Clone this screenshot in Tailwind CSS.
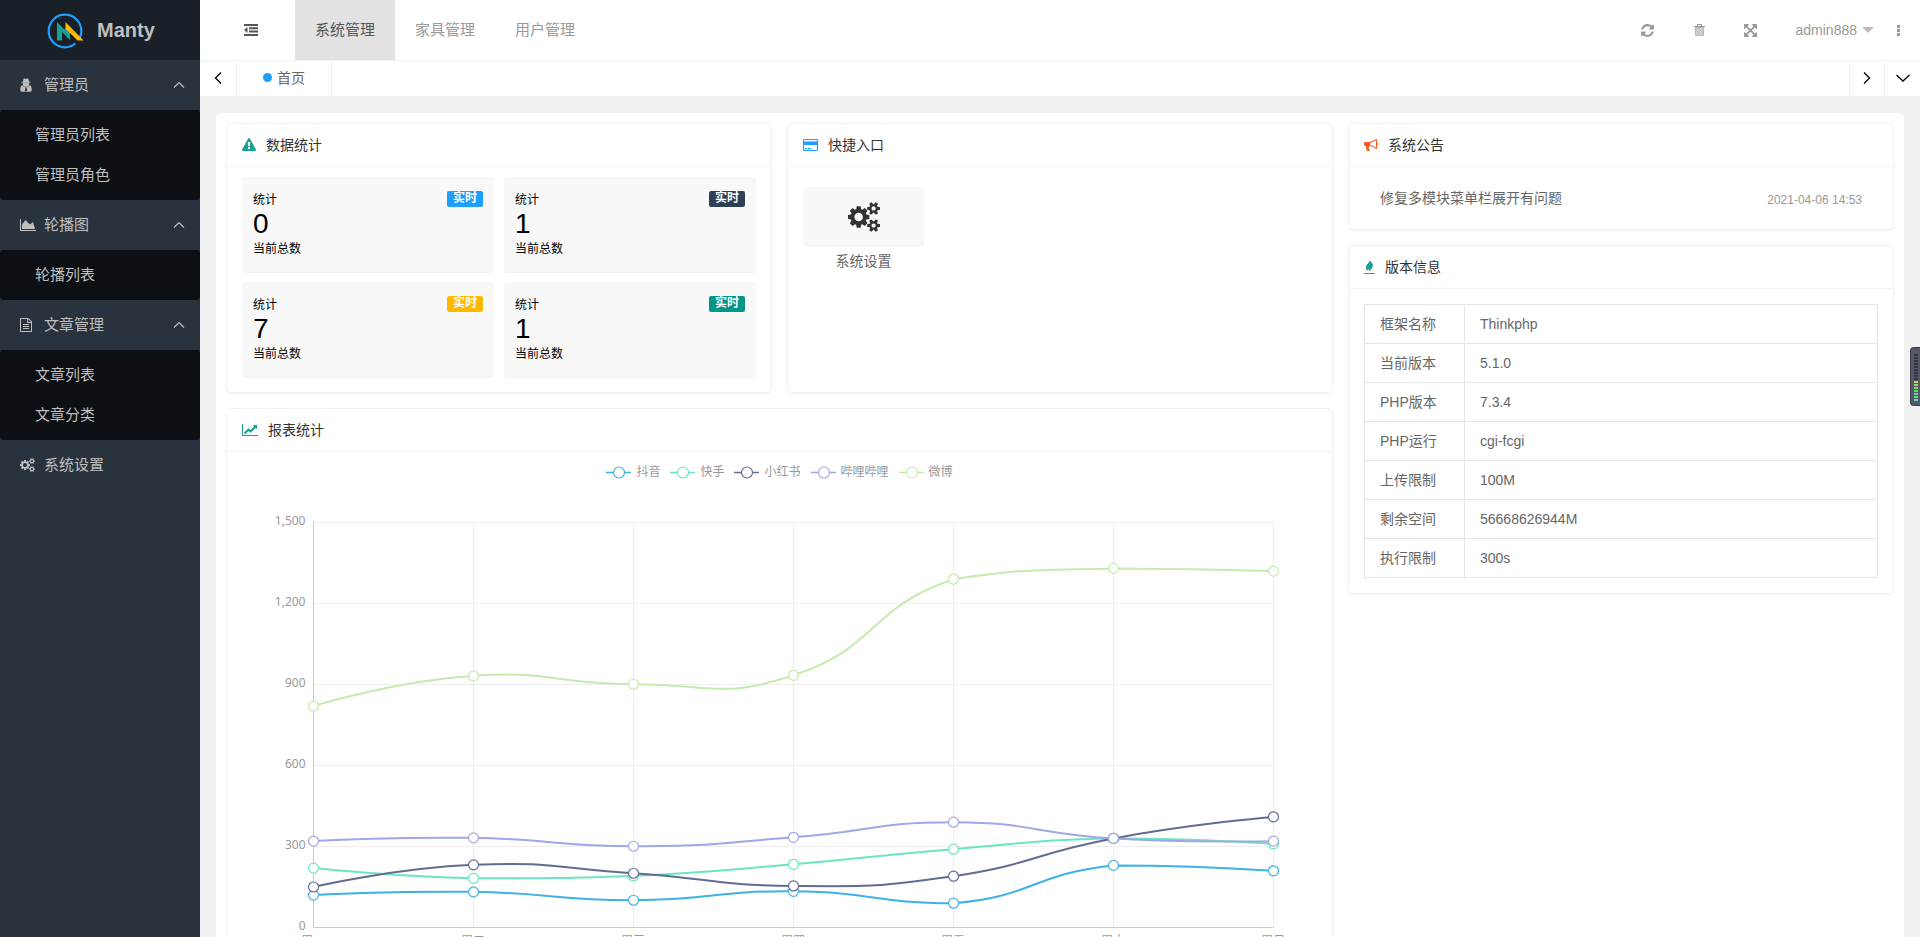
<!DOCTYPE html>
<html lang="zh-CN">
<head>
<meta charset="utf-8">
<meta name="viewport" content="width=device-width, initial-scale=1">
<title>Manty</title>
<script src="https://cdn.jsdelivr.net/npm/@tailwindcss/browser@4"></script>
</head>
<body class="font-['Liberation_Sans','Noto_Sans_CJK_SC',sans-serif] text-sm leading-6 text-[#333]">

<!-- shared icon shapes -->
<svg class="hidden" aria-hidden="true">
  <symbol id="i-cogs" viewBox="0 0 1920 1792"><path d="M896 896q0-106-75-181t-181-75-181 75-75 181 75 181 181 75 181-75 75-181zm768 512q0-52-38-90t-90-38-90 38-38 90q0 53 37.500 90.500t90.500 37.500 90.500-37.500 37.500-90.500zm0-1024q0-52-38-90t-90-38-90 38-38 90q0 53 37.500 90.500t90.500 37.500 90.500-37.500 37.500-90.500zm-384 421v185q0 10-7 19.500t-16 10.500l-155 24q-11 35-32 76 34 48 90 115 7 11 7 20 0 12-7 19-23 30-82.500 89.500t-78.500 59.500q-11 0-21-7l-115-90q-37 19-77 31-11 108-23 155-7 24-30 24h-186q-11 0-20-7.500t-10-17.500l-23-153q-34-10-75-31l-118 89q-7 7-20 7-11 0-21-8-144-133-144-160 0-9 7-19 10-14 41-53t47-61q-23-44-35-82l-152-24q-10-1-17-9.500t-7-19.500v-185q0-10 7-19.500t16-10.500l155-24q11-35 32-76-34-48-90-115-7-11-7-20 0-12 7-20 22-30 82-89t79-59q11 0 21 7l115 90q34-18 77-32 11-108 23-154 7-24 30-24h186q11 0 20 7.500t10 17.500l23 153q34 10 75 31l118-89q8-7 20-7 11 0 21 8 144 133 144 160 0 8-7 19-12 16-42 54t-45 60q23 48 34 82l152 23q10 2 17 10.500t7 19.500zm640 533v140q0 16-149 31-12 27-30 52 51 113 51 138 0 4-4 7-122 71-124 71-8 0-46-47t-52-68q-20 2-30 2t-30-2q-14 21-52 68t-46 47q-2 0-124-71-4-3-4-7 0-25 51-138-18-25-30-52-149-15-149-31v-140q0-16 149-31 13-29 30-52-51-113-51-138 0-4 4-7 4-2 35-20t59-34 30-16q8 0 46 46.500t52 67.500q20-2 30-2t30 2q51-71 92-112l6-2q4 0 124 70 4 3 4 7 0 25-51 138 17 23 30 52 149 15 149 31zm0-1024v140q0 16-149 31-12 27-30 52 51 113 51 138 0 4-4 7-122 71-124 71-8 0-46-47t-52-68q-20 2-30 2t-30-2q-14 21-52 68t-46 47q-2 0-124-71-4-3-4-7 0-25 51-138-18-25-30-52-149-15-149-31v-140q0-16 149-31 13-29 30-52-51-113-51-138 0-4 4-7 4-2 35-20t59-34 30-16q8 0 46 46.500t52 67.500q20-2 30-2t30 2q51-71 92-112l6-2q4 0 124 70 4 3 4 7 0 25-51 138 17 23 30 52 149 15 149 31z"/></symbol>
  <symbol id="i-up" viewBox="0 0 12 8"><path d="M1 6.500 6 1.500 11 6.500" fill="none" stroke="currentColor" stroke-width="1.200"/></symbol>
</svg>

<div class="flex h-screen overflow-hidden bg-[#f1f1f1]">

  <!-- sidebar -->
  <aside class="flex w-[200px] shrink-0 flex-col bg-[#28333e] text-[15px] text-[#bfbfbf]">
    <a href="#" class="flex h-[60px] shrink-0 items-center gap-3 bg-[#192027] pl-[47px]">
      <svg class="size-[38px]" viewBox="0 -1 38 38">
        <circle cx="18" cy="19" r="16.300" fill="none" stroke="#1e9fff" stroke-width="2.200"/>
        <path d="M27 28 L37 28 L34 34 L29 33Z" fill="#192027"/>
        <path d="M10 10 23 23V28L15 20V28.500H10Z" fill="#1aa094"/>
        <path d="M23 15V28L18 22.500V16Z" fill="#1aa094"/>
        <path d="M18.500 10 36.500 28.500H30.500L18.500 16.500Z" fill="#ffb800"/>
      </svg>
      <span class="text-xl font-bold">Manty</span>
    </a>
    <nav>
      <button type="button" class="flex h-[50px] w-full items-center pl-5 pr-[15px] text-left">
        <svg class="mr-3 h-[14px] w-3" viewBox="0 0 12 14" fill="currentColor">
          <path d="M3 3.500 3.600.8Q4 .1 4.800.5L6 .9 7.200.5Q8 .1 8.400.8L9 3.500 10.500 4v.7H1.500V4Z"/>
          <path d="M2.800 4.700h6.400v1.700Q8.900 8.600 6 8.800 3.100 8.600 2.800 6.400Z"/>
          <path fill-rule="evenodd" d="M2.200 7Q.3 8 .3 12.300q0 1.400 1.400 1.400h8.600q1.400 0 1.400-1.400 0-4.300-1.900-5.300L8.500 8.500H3.500ZM5 9.500h2L6.700 10.500 7.200 12.800 6 13.500 4.800 12.800 5.300 10.500Z"/>
        </svg>
        <span class="grow">管理员</span>
        <svg class="h-2 w-3"><use href="#i-up"/></svg>
      </button>
      <div class="flex flex-col rounded-sm bg-[#0c0f13] py-[5px]">
        <a href="#" class="h-10 pl-[35px] leading-10">管理员列表</a>
        <a href="#" class="h-10 pl-[35px] leading-10">管理员角色</a>
      </div>
      <button type="button" class="flex h-[50px] w-full items-center pl-5 pr-[15px] text-left">
        <svg class="mr-2 h-[14px] w-4" viewBox="0 0 2048 1792" fill="currentColor"><path d="M2048 1536v128h-2048v-1536h128v1408h1920zm-384-1024l256 896h-1664v-576l448-576 576 576z"/></svg>
        <span class="grow">轮播图</span>
        <svg class="h-2 w-3"><use href="#i-up"/></svg>
      </button>
      <div class="flex flex-col rounded-sm bg-[#0c0f13] py-[5px]">
        <a href="#" class="h-10 pl-[35px] leading-10">轮播列表</a>
      </div>
      <button type="button" class="flex h-[50px] w-full items-center pl-[19px] pr-[15px] text-left">
        <svg class="mr-[11px] size-[14px]" viewBox="0 0 1792 1792" fill="currentColor"><path d="M1596 380q28 28 48 76t20 88v1152q0 40-28 68t-68 28h-1344q-40 0-68-28t-28-68v-1600q0-40 28-68t68-28h896q40 0 88 20t76 48zm-444-244v376h376q-10-29-22-41l-313-313q-12-12-41-22zm384 1528v-1024h-416q-40 0-68-28t-28-68v-416h-768v1536h1280zm-1024-864q0-14 9-23t23-9h704q14 0 23 9t9 23v64q0 14-9 23t-23 9h-704q-14 0-23-9t-9-23v-64zm736 224q14 0 23 9t9 23v64q0 14-9 23t-23 9h-704q-14 0-23-9t-9-23v-64q0-14 9-23t23-9h704zm0 256q14 0 23 9t9 23v64q0 14-9 23t-23 9h-704q-14 0-23-9t-9-23v-64q0-14 9-23t23-9h704z"/></svg>
        <span class="grow">文章管理</span>
        <svg class="h-2 w-3"><use href="#i-up"/></svg>
      </button>
      <div class="flex flex-col rounded-sm bg-[#0c0f13] py-[5px]">
        <a href="#" class="h-10 pl-[35px] leading-10">文章列表</a>
        <a href="#" class="h-10 pl-[35px] leading-10">文章分类</a>
      </div>
      <a href="#" class="flex h-[50px] items-center pl-5">
        <svg class="mr-[9px] h-[14px] w-[15px]" fill="currentColor"><use href="#i-cogs"/></svg>
        <span>系统设置</span>
      </a>
    </nav>
  </aside>

  <div class="flex min-w-0 grow flex-col">
    <!-- top bar -->
    <header class="flex h-[60px] shrink-0 items-center bg-white text-[#999]">
      <button type="button" aria-label="收起菜单" class="ml-[7px] flex h-full w-[88px] items-center justify-center text-[#555]">
        <svg class="h-3 w-[14px]" viewBox="0 0 14 12" fill="currentColor"><path d="M0 0h14v2H0zM5 3.300h9v2H5zM5 6.600h9v2H5zM0 10h14v2H0zM3.500 3v6L0 6z"/></svg>
      </button>
      <nav class="flex h-full text-[15px] leading-[60px]">
        <a href="#" class="bg-[#e2e2e2] px-5 text-[#555]">系统管理</a>
        <a href="#" class="px-5">家具管理</a>
        <a href="#" class="px-5">用户管理</a>
      </nav>
      <div class="ml-auto flex h-full items-center">
        <button type="button" aria-label="刷新" class="flex h-full w-[52px] items-center justify-center">
          <svg class="size-[15px]" viewBox="0 0 1792 1792" fill="currentColor"><path d="M1639 1056q0 5-1 7-64 268-268 434.500t-478 166.500q-146 0-282.500-55t-243.500-157l-129 129q-19 19-45 19t-45-19-19-45v-448q0-26 19-45t45-19h448q26 0 45 19t19 45-19 45l-137 137q71 66 161 102t187 36q134 0 250-65t186-179q11-17 53-117 8-23 30-23h192q13 0 22.500 9.500t9.500 22.500zm25-800v448q0 26-19 45t-45 19h-448q-26 0-45-19t-19-45 19-45l138-138q-148-137-349-137-134 0-250 65t-186 179q-11 17-53 117-8 23-30 23h-199q-13 0-22.500-9.500t-9.500-22.500v-7q65-268 270-434.500t480-166.500q146 0 284 55.500t245 156.500l130-129q19-19 45-19t45 19 19 45z"/></svg>
        </button>
        <button type="button" aria-label="清除缓存" class="flex h-full w-[51px] items-center justify-center">
          <svg class="h-3 w-[11px]" viewBox="0 0 11 12"><path d="M1.500 3.500h8V11q0 .5-.5.500H2Q1.500 11.500 1.500 11Z" fill="#ccc" stroke="#b5b5b5"/><path d="M0 2.500h11M3.500 2.500v-2h4v2" fill="none" stroke="#999"/></svg>
        </button>
        <button type="button" aria-label="全屏" class="flex h-full w-[51px] items-center justify-center">
          <svg class="size-[15px]" viewBox="0 0 1792 1792" fill="currentColor"><path d="M1411 541l-355 355 355 355 144-144q29-31 70-14 39 17 39 59v448q0 26-19 45t-45 19h-448q-42 0-59-40-17-39 14-69l144-144-355-355-355 355 144 144q31 30 14 69-17 40-59 40h-448q-26 0-45-19t-19-45v-448q0-42 40-59 39-17 69 14l144 144 355-355-355-355-144 144q-19 19-45 19-12 0-24-5-40-17-40-59v-448q0-26 19-45t45-19h448q42 0 59 40 17 39-14 69l-144 144 355 355 355-355-144-144q-31-30-14-69 17-40 59-40h448q26 0 45 19t19 45v448q0 42-39 59-13 5-25 5-26 0-45-19z"/></svg>
        </button>
        <button type="button" class="flex h-full items-center gap-1 pl-5 pr-[3px]">admin888
          <svg class="ml-px h-[6px] w-3" viewBox="0 0 12 6"><path d="M0 0h12L6 6z" fill="#bbb"/></svg>
        </button>
        <button type="button" aria-label="更多" class="flex h-full w-[43px] items-center justify-center">
          <svg class="h-[11px] w-[3px]" viewBox="0 0 3 11" fill="currentColor"><path d="M0 0h3v3H0zM0 4h3v3H0zM0 8h3v3H0z"/></svg>
        </button>
      </div>
    </header>

    <!-- page tabs -->
    <div class="flex h-[37px] shrink-0 border-y border-[#f1f1f1] bg-white text-black">
      <button type="button" aria-label="向左" class="flex w-[37px] items-center justify-center border-r border-[#f1f1f1] pb-[2px]">
        <svg class="h-3 w-2" viewBox="0 0 8 12"><path d="M7 .5 1.500 6 7 11.500" fill="none" stroke="currentColor" stroke-width="1.300"/></svg>
      </button>
      <a href="#" class="flex w-[95px] items-center justify-center gap-[5px] border-r border-[#f1f1f1] pb-[2px] text-[#666]">
        <span class="size-[9px] rounded-full bg-[#1e9fff]"></span>首页
      </a>
      <button type="button" aria-label="向右" class="ml-auto flex w-[35px] items-center justify-center border-l border-[#f1f1f1] pb-[2px]">
        <svg class="h-3 w-2" viewBox="0 0 8 12"><path d="M1 .5 6.500 6 1 11.500" fill="none" stroke="currentColor" stroke-width="1.300"/></svg>
      </button>
      <button type="button" aria-label="标签操作" class="flex w-9 items-center justify-center border-l border-[#f1f1f1] pb-[2px]">
        <svg class="h-2 w-[14px]" viewBox="0 0 14 8"><path d="M.5 1 7 7 13.500 1" fill="none" stroke="currentColor" stroke-width="1.300"/></svg>
      </button>
    </div>

    <!-- dashboard -->
    <main class="grow overflow-y-auto p-4 [scrollbar-width:none]">
      <div class="grid grid-cols-3 items-start gap-[15px] rounded-md bg-white p-[10px]">
        <div class="col-span-2 grid grid-cols-2 gap-[15px]">

          <section class="rounded-[5px] border border-[#f1f1f1] shadow-xs">
            <h2 class="flex h-[43px] items-center border-b border-[#f4f4f4] px-[15px]">
              <svg class="mr-[10px] size-[14px] text-[#1aa094]" viewBox="0 0 1792 1792" fill="currentColor"><path d="M1024 1375v-190q0-14-9.500-23.500t-22.500-9.500h-192q-13 0-22.500 9.500t-9.500 23.500v190q0 14 9.500 23.500t22.500 9.500h192q13 0 22.500-9.500t9.500-23.500zm-2-374l18-459q0-12-10-19-13-11-24-11h-220q-11 0-24 11-10 7-10 21l17 457q0 10 10 16.500t24 6.500h185q14 0 23.500-6.500t10.500-16.500zm-14-934l768 1408q35 63-2 126-17 29-46.500 46t-63.500 17h-1536q-34 0-63.500-17t-46.500-46q-37-63-2-126l768-1408q17-31 47-49t65-18 65 18 47 49z"/></svg>
              数据统计
            </h2>
            <div class="grid grid-cols-2 gap-[10px] px-[15px] pb-[15px] pt-[10px] text-xs text-black">
              <div class="h-[95px] rounded-sm bg-[#f8f8f8] px-[11px] pt-[14px] shadow-2xs">
                <div class="flex items-start justify-between"><h3 class="pt-px leading-4">统计</h3><span class="h-4 rounded-xs bg-[#1e9fff] px-[6px] font-bold leading-[15px] text-white">实时</span></div>
                <p class="text-[28px] leading-8">0</p>
                <p class="leading-[18px]">当前总数</p>
              </div>
              <div class="h-[95px] rounded-sm bg-[#f8f8f8] px-[11px] pt-[14px] shadow-2xs">
                <div class="flex items-start justify-between"><h3 class="pt-px leading-4">统计</h3><span class="h-4 rounded-xs bg-[#2f4056] px-[6px] font-bold leading-[15px] text-white">实时</span></div>
                <p class="text-[28px] leading-8">1</p>
                <p class="leading-[18px]">当前总数</p>
              </div>
              <div class="h-[95px] rounded-sm bg-[#f8f8f8] px-[11px] pt-[14px] shadow-2xs">
                <div class="flex items-start justify-between"><h3 class="pt-px leading-4">统计</h3><span class="h-4 rounded-xs bg-[#ffb800] px-[6px] font-bold leading-[15px] text-white">实时</span></div>
                <p class="text-[28px] leading-8">7</p>
                <p class="leading-[18px]">当前总数</p>
              </div>
              <div class="h-[95px] rounded-sm bg-[#f8f8f8] px-[11px] pt-[14px] shadow-2xs">
                <div class="flex items-start justify-between"><h3 class="pt-px leading-4">统计</h3><span class="h-4 rounded-xs bg-[#009688] px-[6px] font-bold leading-[15px] text-white">实时</span></div>
                <p class="text-[28px] leading-8">1</p>
                <p class="leading-[18px]">当前总数</p>
              </div>
            </div>
          </section>

          <section class="rounded-[5px] border border-[#f1f1f1] shadow-xs">
            <h2 class="flex h-[43px] items-center border-b border-[#f4f4f4] px-[15px]">
              <svg class="mr-[10px] h-[14px] w-[15px] text-[#1e9fff]" viewBox="0 0 1920 1792" fill="currentColor"><path d="M1760 128q66 0 113 47t47 113v1216q0 66-47 113t-113 47h-1600q-66 0-113-47t-47-113v-1216q0-66 47-113t113-47h1600zm-1600 128q-13 0-22.500 9.500t-9.500 22.500v224h1664v-224q0-13-9.500-22.500t-22.500-9.500h-1600zm1600 1280q13 0 22.500-9.500t9.500-22.500v-608h-1664v608q0 13 9.500 22.500t22.500 9.500h1600zm-1504-128v-128h256v128h-256zm384 0v-128h384v128h-384z"/><path d="M128 440h1664v470H128z"/></svg>
              快捷入口
            </h2>
            <div class="px-[15px] pt-5">
              <a href="#" class="block w-[121px] text-center text-[#666]">
                <span class="flex h-[60px] items-center justify-center rounded-sm bg-[#f8f8f8] text-[#333]">
                  <svg class="h-[30px] w-8" fill="currentColor"><use href="#i-cogs"/></svg>
                </span>
                <span class="block leading-7">系统设置</span>
              </a>
            </div>
          </section>

          <section class="col-span-2 rounded-[5px] border border-[#f1f1f1] shadow-xs">
            <h2 class="flex h-[43px] items-center border-b border-[#f4f4f4] px-[15px]">
              <svg class="mr-[10px] h-[14px] w-4 text-[#1aa094]" viewBox="0 0 2048 1792" fill="currentColor"><path d="M2048 1536v128h-2048v-1536h128v1408h1920zm-128-1248v435q0 21-19.500 29.500t-35.500-7.500l-121-121-633 633q-10 10-23 10t-23-10l-233-233-416 416-192-192 585-585q10-10 23-10t23 10l233 233 464-464-121-121q-16-16-7.500-35.500t29.500-19.500h435q14 0 23 9t9 23z"/></svg>
              报表统计
            </h2>
            <ul class="flex h-10 items-center justify-center gap-[10px] text-xs text-[#999]">
              <li class="flex items-center gap-[5px]"><svg class="h-[14px] w-[25px] text-[#3fb1e3]" viewBox="0 0 25 14" fill="none" stroke="currentColor"><path d="M0 7.500h7M19 7.500h6" stroke-width="1.500"/><circle cx="13" cy="7.500" r="5.500" stroke-width="1.200"/></svg>抖音</li>
              <li class="flex items-center gap-[5px]"><svg class="h-[14px] w-[25px] text-[#6be6c1]" viewBox="0 0 25 14" fill="none" stroke="currentColor"><path d="M0 7.500h7M19 7.500h6" stroke-width="1.500"/><circle cx="13" cy="7.500" r="5.500" stroke-width="1.200"/></svg>快手</li>
              <li class="flex items-center gap-[5px]"><svg class="h-[14px] w-[25px] text-[#626c91]" viewBox="0 0 25 14" fill="none" stroke="currentColor"><path d="M0 7.500h7M19 7.500h6" stroke-width="1.500"/><circle cx="13" cy="7.500" r="5.500" stroke-width="1.200"/></svg>小红书</li>
              <li class="flex items-center gap-[5px]"><svg class="h-[14px] w-[25px] text-[#a0a7e6]" viewBox="0 0 25 14" fill="none" stroke="currentColor"><path d="M0 7.500h7M19 7.500h6" stroke-width="1.500"/><circle cx="13" cy="7.500" r="5.500" stroke-width="1.200"/></svg>哔哩哔哩</li>
              <li class="flex items-center gap-[5px]"><svg class="h-[14px] w-[25px] text-[#c4ebad]" viewBox="0 0 25 14" fill="none" stroke="currentColor"><path d="M0 7.500h7M19 7.500h6" stroke-width="1.500"/><circle cx="13" cy="7.500" r="5.500" stroke-width="1.200"/></svg>微博</li>
            </ul>
            <div class="px-[15px] pb-[10px]">
              <svg id="chart" class="block h-[470px] w-full font-['Noto_Sans','Noto_Sans_CJK_SC',sans-serif] text-xs" role="img" aria-label="报表统计"></svg>
            </div>
          </section>
        </div>

        <div class="grid gap-[15px]">
          <section class="rounded-[5px] border border-[#f1f1f1] shadow-xs">
            <h2 class="flex h-[43px] items-center border-b border-[#f4f4f4] px-[15px]">
              <svg class="mr-[10px] size-[14px] text-[#ff5722]" viewBox="0 0 1792 1792" fill="currentColor"><path d="M1664 640q53 0 90.500 37.500t37.500 90.500-37.500 90.500-90.500 37.500v384q0 52-38 90t-90 38q-417-347-812-380-58 19-91 66t-31 100.500 40 92.500q-20 33-23 65.500t6 58 33.500 55 48 50 61.500 50.500q-29 58-111.500 83t-168.500 11.500-132-55.500q-7-23-29.500-87.500t-32-94.500-23-89-15-101 3.500-98.500 22-110.500h-122q-66 0-113-47t-47-113v-192q0-66 47-113t113-47h480q435 0 896-384 52 0 90 38t38 90v384zm-128 604v-954q-394 302-768 343v270q377 42 768 341z"/></svg>
              系统公告
            </h2>
            <div class="flex h-[62px] items-center justify-between px-[31px]">
              <a href="#" class="text-[#666]">修复多模块菜单栏展开有问题</a>
              <time class="pt-1 text-xs text-[#999]">2021-04-06 14:53</time>
            </div>
          </section>

          <section class="rounded-[5px] border border-[#f1f1f1] shadow-xs">
            <h2 class="flex h-[43px] items-center border-b border-[#f4f4f4] px-[15px]">
              <svg class="mr-[10px] h-[14px] w-[11px] text-[#1aa094]" viewBox="0 0 11 14" fill="currentColor"><path d="M5.500 0Q5.800 1.200 7.500 2.300 9.500 4 8.800 6.500 8 9.500 4.800 11.500 5.200 9.800 4.200 9 3.800 10.500 3.500 10.800 1.300 8.500 2 6.200 2.500 4.500 4.200 3.200 5.500 2 5.500 0Z"/><path d="M0 13h11v1H0z"/></svg>
              版本信息
            </h2>
            <div class="p-[15px]">
              <table class="w-full border-collapse text-left text-[#666]">
                <tbody>
                  <tr class="h-[39px]"><th scope="row" class="w-[100px] border border-[#e6e6e6] px-[15px] font-normal">框架名称</th><td class="border border-[#e6e6e6] px-[15px]">Thinkphp</td></tr>
                  <tr class="h-[39px]"><th scope="row" class="border border-[#e6e6e6] px-[15px] font-normal">当前版本</th><td class="border border-[#e6e6e6] px-[15px]">5.1.0</td></tr>
                  <tr class="h-[39px]"><th scope="row" class="border border-[#e6e6e6] px-[15px] font-normal">PHP版本</th><td class="border border-[#e6e6e6] px-[15px]">7.3.4</td></tr>
                  <tr class="h-[39px]"><th scope="row" class="border border-[#e6e6e6] px-[15px] font-normal">PHP运行</th><td class="border border-[#e6e6e6] px-[15px]">cgi-fcgi</td></tr>
                  <tr class="h-[39px]"><th scope="row" class="border border-[#e6e6e6] px-[15px] font-normal">上传限制</th><td class="border border-[#e6e6e6] px-[15px]">100M</td></tr>
                  <tr class="h-[39px]"><th scope="row" class="border border-[#e6e6e6] px-[15px] font-normal">剩余空间</th><td class="border border-[#e6e6e6] px-[15px]">56668626944M</td></tr>
                  <tr class="h-[39px]"><th scope="row" class="border border-[#e6e6e6] px-[15px] font-normal">执行限制</th><td class="border border-[#e6e6e6] px-[15px]">300s</td></tr>
                </tbody>
              </table>
            </div>
          </section>
        </div>
      </div>
    </main>
  </div>
</div>

<!-- floating level meter on the window's edge -->
<div class="fixed right-0 top-[347px] flex h-[59px] w-[10px] justify-center rounded-l-sm border border-r-0 border-[#3a3c48] bg-[#555866] pt-[6px]">
  <svg id="meter" class="ml-px h-[47px] w-1" viewBox="0 0 4 47" aria-hidden="true"></svg>
</div>

<script>
const NS = 'http://www.w3.org/2000/svg';
function add(parent, tag, attrs, text) {
  const el = document.createElementNS(NS, tag);
  for (const k in attrs) el.setAttribute(k, attrs[k]);
  if (text) el.textContent = text;
  parent.appendChild(el);
}

const days = ['周一', '周二', '周三', '周四', '周五', '周六', '周日'];
const series = [
  ['#3fb1e3', [120, 132, 101, 134, 90, 230, 210]],
  ['#6be6c1', [220, 182, 191, 234, 290, 330, 310]],
  ['#626c91', [150, 232, 201, 154, 190, 330, 410]],
  ['#a0a7e6', [320, 332, 301, 334, 390, 330, 320]],
  ['#c4ebad', [820, 932, 901, 934, 1290, 1330, 1320]]
];

// Smooth path through the points, control points kept inside the series' own bounds
function curve(p) {
  const ys = p.map(q => q[1]), lo = Math.min(...ys), hi = Math.max(...ys);
  const clamp = c => [c[0], Math.min(hi, Math.max(lo, c[1]))];
  let d = 'M' + p[0], c0 = p[0];
  for (let i = 1; i < p.length; i++) {
    let c1 = p[i], next = p[i];
    if (i < p.length - 1) {
      const a = p[i - 1], b = p[i + 1], v = [b[0] - a[0], b[1] - a[1]];
      const la = Math.hypot(p[i][0] - a[0], p[i][1] - a[1]);
      const lb = Math.hypot(b[0] - p[i][0], b[1] - p[i][1]);
      const r = lb / (la + lb);
      c1 = [p[i][0] - v[0] * 0.5 * (1 - r), p[i][1] - v[1] * 0.5 * (1 - r)];
      next = [p[i][0] + v[0] * 0.5 * r, p[i][1] + v[1] * 0.5 * r];
    }
    d += 'C' + clamp(c0) + ' ' + clamp(c1) + ' ' + p[i];
    c0 = next;
  }
  return d;
}

const chart = document.getElementById('chart');
function draw() {
  chart.replaceChildren();
  const left = 71.5, right = chart.getBoundingClientRect().width - 43.5, top = 30.5, step = 81, base = top + step * 5;
  const x = i => left + (right - left) * i / 6;
  const y = v => base - v * step / 300;
  for (let v = 0; v <= 1500; v += 300) {
    if (v) add(chart, 'path', { d: `M${left} ${y(v)}H${right}`, stroke: '#eee' });
    add(chart, 'text', { x: left - 8, y: y(v) + 2, 'text-anchor': 'end', fill: '#999' }, v.toLocaleString('en-US'));
  }
  days.forEach((t, i) => {
    const gx = Math.floor(x(i)) + 0.5;
    if (i) add(chart, 'path', { d: `M${gx} ${top}V${base}`, stroke: '#eee' });
    add(chart, 'text', { x: gx - 0.5, y: base + 17, 'text-anchor': 'middle', fill: '#999' }, t);
  });
  add(chart, 'path', { d: `M${left} ${top - 1}V${base}H${right}`, stroke: '#ccc', fill: 'none' });
  for (const [color, data] of series) {
    const pts = data.map((v, i) => [x(i), y(v)]);
    add(chart, 'path', { d: curve(pts), stroke: color, 'stroke-width': 2, fill: 'none' });
    for (const [cx, cy] of pts) add(chart, 'circle', { cx, cy, r: 5, fill: '#fff', stroke: color, 'stroke-width': 1.2 });
  }
}
new ResizeObserver(draw).observe(chart);

const meter = document.getElementById('meter');
for (let i = 0; i < 16; i++) {
  const fill = i < 9 ? '#33353f' : `hsl(${80 + (i - 9) * 14} 65% 62%)`;
  add(meter, 'rect', { x: 0, y: i * 3, width: 4, height: 2, fill });
}
</script>
</body>
</html>
